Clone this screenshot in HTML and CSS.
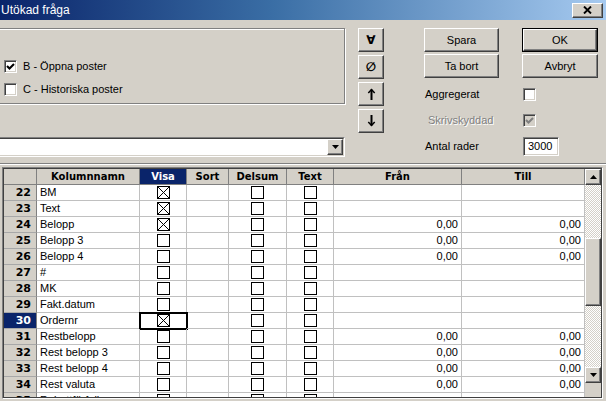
FILE: index.html
```html
<!DOCTYPE html>
<html>
<head>
<meta charset="utf-8">
<title>Utökad fråga</title>
<link rel="stylesheet" href="styles.css">
</head>
<body>
<div class="titlebar">
  <span class="title">Utökad fråga</span>
  <div class="close raised"><svg width="9" height="8" viewBox="0 0 9 8"><path d="M1 0.5L8 7.5M8 0.5L1 7.5" stroke="#000" stroke-width="1.9" fill="none"/></svg></div>
</div>

<div class="top">
  <div class="left">
    <div class="groupbox">
      <div class="chk-row"><span class="cb"><svg width="11" height="11" viewBox="0 0 11 11"><polyline points="2,5 4.5,7.5 9,3" stroke="#000" stroke-width="2.1" fill="none"/></svg></span><span>B - Öppna poster</span></div>
      <div class="chk-row"><span class="cb"></span><span>C - Historiska poster</span></div>
    </div>
    <div class="combo">
      <div class="combo-in">
        <div class="combo-btn raised"><svg width="7" height="4" viewBox="0 0 7 4"><polygon points="0,0 7,0 3.5,4" fill="#000"/></svg></div>
      </div>
    </div>
  </div>

  <div class="ops">
    <div class="op raised"><span class="glyph">∀</span></div>
    <div class="op raised"><span class="glyph ital">∅</span></div>
    <div class="op raised"><svg width="9" height="12" viewBox="0 0 9 12"><path d="M4.5 1.5V12" stroke="#000" stroke-width="2" fill="none"/><path d="M1.3 5L4.5 1.6L7.7 5" stroke="#000" stroke-width="1.5" fill="none"/></svg></div>
    <div class="op raised"><svg width="9" height="12" viewBox="0 0 9 12"><path d="M4.5 0V10.5" stroke="#000" stroke-width="2" fill="none"/><path d="M1.3 7L4.5 10.4L7.7 7" stroke="#000" stroke-width="1.5" fill="none"/></svg></div>
  </div>

  <div class="actions">
    <div class="act-row">
      <div class="btn raised w1">Spara</div>
      <div class="btn default w2"><div class="raised inner">OK</div></div>
    </div>
    <div class="act-row r2">
      <div class="btn raised w1">Ta bort</div>
      <div class="btn raised w2">Avbryt</div>
    </div>
    <div class="opt-row">
      <span class="opt-label">Aggregerat</span>
      <span class="cb"></span>
    </div>
    <div class="opt-row">
      <span class="opt-label disabled">Skrivskyddad</span>
      <span class="cb dis"><svg width="11" height="11" viewBox="0 0 11 11"><polyline points="2,5 4.5,7.5 9,3" stroke="#808080" stroke-width="2.1" fill="none"/></svg></span>
    </div>
    <div class="opt-row">
      <span class="opt-label">Antal rader</span>
      <span class="num-input">3000</span>
    </div>
  </div>
</div>

<div class="sep"></div>

<div class="gridbox">
  <div class="gridinner">
    <div class="grid">
      <div class="c h"></div><div class="c h">Kolumnnamn</div><div class="c h hsel">Visa</div><div class="c h">Sort</div><div class="c h">Delsum</div><div class="c h">Text</div><div class="c h">Från</div><div class="c h">Till</div>

      <div class="c rh">22</div><div class="c">BM</div><div class="c ck"><span class="box"><svg width="11" height="11" viewBox="0 0 11 11"><path d="M0 0L11 11M11 0L0 11" stroke="#000" stroke-width="1"/></svg></span></div><div class="c"></div><div class="c ck"><span class="box"></span></div><div class="c ck"><span class="box"></span></div><div class="c num"></div><div class="c num"></div>

      <div class="c rh">23</div><div class="c">Text</div><div class="c ck"><span class="box"><svg width="11" height="11" viewBox="0 0 11 11"><path d="M0 0L11 11M11 0L0 11" stroke="#000" stroke-width="1"/></svg></span></div><div class="c"></div><div class="c ck"><span class="box"></span></div><div class="c ck"><span class="box"></span></div><div class="c num"></div><div class="c num"></div>

      <div class="c rh">24</div><div class="c">Belopp</div><div class="c ck"><span class="box"><svg width="11" height="11" viewBox="0 0 11 11"><path d="M0 0L11 11M11 0L0 11" stroke="#000" stroke-width="1"/></svg></span></div><div class="c"></div><div class="c ck"><span class="box"></span></div><div class="c ck"><span class="box"></span></div><div class="c num">0,00</div><div class="c num">0,00</div>

      <div class="c rh">25</div><div class="c">Belopp 3</div><div class="c ck"><span class="box"></span></div><div class="c"></div><div class="c ck"><span class="box"></span></div><div class="c ck"><span class="box"></span></div><div class="c num">0,00</div><div class="c num">0,00</div>

      <div class="c rh">26</div><div class="c">Belopp 4</div><div class="c ck"><span class="box"></span></div><div class="c"></div><div class="c ck"><span class="box"></span></div><div class="c ck"><span class="box"></span></div><div class="c num">0,00</div><div class="c num">0,00</div>

      <div class="c rh">27</div><div class="c">#</div><div class="c ck"><span class="box"></span></div><div class="c"></div><div class="c ck"><span class="box"></span></div><div class="c ck"><span class="box"></span></div><div class="c num"></div><div class="c num"></div>

      <div class="c rh">28</div><div class="c">MK</div><div class="c ck"><span class="box"></span></div><div class="c"></div><div class="c ck"><span class="box"></span></div><div class="c ck"><span class="box"></span></div><div class="c num"></div><div class="c num"></div>

      <div class="c rh">29</div><div class="c">Fakt.datum</div><div class="c ck"><span class="box"></span></div><div class="c"></div><div class="c ck"><span class="box"></span></div><div class="c ck"><span class="box"></span></div><div class="c num"></div><div class="c num"></div>

      <div class="c rh rsel">30</div><div class="c">Ordernr</div><div class="c ck focus"><span class="box"><svg width="11" height="11" viewBox="0 0 11 11"><path d="M0 0L11 11M11 0L0 11" stroke="#000" stroke-width="1"/></svg></span></div><div class="c"></div><div class="c ck"><span class="box"></span></div><div class="c ck"><span class="box"></span></div><div class="c num"></div><div class="c num"></div>

      <div class="c rh">31</div><div class="c">Restbelopp</div><div class="c ck"><span class="box"></span></div><div class="c"></div><div class="c ck"><span class="box"></span></div><div class="c ck"><span class="box"></span></div><div class="c num">0,00</div><div class="c num">0,00</div>

      <div class="c rh">32</div><div class="c">Rest belopp 3</div><div class="c ck"><span class="box"></span></div><div class="c"></div><div class="c ck"><span class="box"></span></div><div class="c ck"><span class="box"></span></div><div class="c num">0,00</div><div class="c num">0,00</div>

      <div class="c rh">33</div><div class="c">Rest belopp 4</div><div class="c ck"><span class="box"></span></div><div class="c"></div><div class="c ck"><span class="box"></span></div><div class="c ck"><span class="box"></span></div><div class="c num">0,00</div><div class="c num">0,00</div>

      <div class="c rh">34</div><div class="c">Rest valuta</div><div class="c ck"><span class="box"></span></div><div class="c"></div><div class="c ck"><span class="box"></span></div><div class="c ck"><span class="box"></span></div><div class="c num">0,00</div><div class="c num">0,00</div>

      <div class="c rh">35</div><div class="c">Rabattförfall</div><div class="c ck"><span class="box"></span></div><div class="c"></div><div class="c ck"><span class="box"></span></div><div class="c ck"><span class="box"></span></div><div class="c num"></div><div class="c num"></div>
    </div>
    <div class="vscroll">
      <div class="sb-btn raised"><svg width="7" height="4" viewBox="0 0 7 4"><polygon points="3.5,0 7,4 0,4" fill="#000"/></svg></div>
      <div class="sb-track t1"></div>
      <div class="sb-thumb raised"></div>
      <div class="sb-track t2"></div>
      <div class="sb-btn raised"><svg width="7" height="4" viewBox="0 0 7 4"><polygon points="0,0 7,0 3.5,4" fill="#000"/></svg></div>
      <div class="sb-corner"></div>
    </div>
  </div>
</div>
</body>
</html>
```

FILE: styles.css
```css
* { box-sizing: border-box; }
html, body { margin: 0; padding: 0; }
body {
  width: 606px;
  height: 401px;
  overflow: hidden;
  background: #d4d0c8;
  font-family: "Liberation Sans", Arial, sans-serif;
  font-size: 11px;
  color: #000;
}

.raised {
  background: #d4d0c8;
  border: 1px solid;
  border-color: #fff #404040 #404040 #fff;
  box-shadow: inset -1px -1px #808080;
}

/* title bar */
.titlebar {
  height: 20px;
  display: flex;
  align-items: center;
  justify-content: space-between;
  background: linear-gradient(to right, #0a246a 0%, #3a6ea5 45%, #a6caf0 100%);
}
.title {
  color: #fff;
  font-size: 12px;
  padding-left: 1px;
}
.close {
  width: 31px;
  height: 15px;
  margin-right: 3px;
  display: flex;
  align-items: center;
  justify-content: center;
}

/* top area */
.top {
  display: flex;
  height: 142px;
}
.left {
  flex: none;
  width: 347px;
  margin-left: -2px;
  padding-top: 8px;
}
.groupbox {
  height: 76px;
  border: 1px solid #808080;
  box-shadow: inset 1px 1px #fff, 1px 1px #fff;
  padding: 29px 0 0 5px;
  display: flex;
  flex-direction: column;
  gap: 7px;
}
.chk-row {
  display: flex;
  align-items: center;
  height: 16px;
  gap: 6px;
}
.cb {
  flex: none;
  width: 13px;
  height: 13px;
  background: #fff;
  border: 1px solid;
  border-color: #808080 #fff #fff #808080;
  box-shadow: inset 1px 1px #404040, inset -1px -1px #d4d0c8;
  display: block;
}
.cb svg { display: block; }
.cb.dis { background: #d4d0c8; }

.combo {
  margin-top: 33px;
  height: 20px;
  border: 1px solid;
  border-color: #808080 #fff #fff #808080;
}
.combo-in {
  height: 100%;
  background: #fff;
  border: 1px solid;
  border-color: #404040 #d4d0c8 #d4d0c8 #404040;
  display: flex;
  justify-content: flex-end;
}
.combo-btn {
  width: 16px;
  height: 100%;
  display: flex;
  align-items: center;
  justify-content: center;
}

.ops {
  flex: none;
  width: 26px;
  margin-left: 13px;
  padding-top: 8px;
  display: flex;
  flex-direction: column;
  gap: 3px;
}
.op {
  height: 24px;
  display: flex;
  align-items: center;
  justify-content: center;
}
.glyph {
  font-family: "DejaVu Sans", sans-serif;
  font-weight: bold;
  font-size: 12px;
  line-height: 12px;
}
.glyph.ital { font-style: italic; }

.actions {
  flex: none;
  width: 175px;
  margin-left: 40px;
  padding-top: 8px;
}
.act-row {
  display: flex;
  gap: 23px;
  height: 24px;
}
.act-row.r2 { margin-top: 2px; }
.btn {
  height: 24px;
  display: flex;
  align-items: center;
  justify-content: center;
  font-size: 11px;
}
.w1 { width: 75px; }
.w2 { width: 76px; }
.btn.default {
  border: 1px solid #000;
}
.btn.default .inner {
  width: 100%;
  height: 100%;
  display: flex;
  align-items: center;
  justify-content: center;
}
.opt-row {
  display: flex;
  align-items: center;
  height: 20px;
  margin-top: 6px;
}
.opt-label {
  width: 99px;
  padding-left: 1px;
}
.opt-label.disabled {
  color: #808080;
  text-shadow: 1px 1px #fff;
  padding-left: 4px;
}
.num-input {
  width: 36px;
  height: 19px;
  background: #fff;
  border: 1px solid;
  border-color: #808080 #fff #fff #808080;
  box-shadow: inset 1px 1px #404040, inset -1px -1px #d4d0c8;
  padding-left: 4px;
  line-height: 17px;
}

.sep {
  margin-top: 1px;
  height: 2px;
  border-top: 1px solid #808080;
  border-bottom: 1px solid #fff;
}

/* grid */
.gridbox {
  margin: 2px 0 0 2px;
  width: 601px;
  height: 232px;
  border: 1px solid;
  border-color: #808080 #fff #fff #808080;
}
.gridinner {
  height: 100%;
  border: 1px solid #404040;
  display: flex;
  overflow: hidden;
}
.grid {
  flex: none;
  width: 581px;
  display: grid;
  grid-template-columns: 33px 103px 47px 42px 58px 47px 128px 123px;
  grid-auto-rows: 16px;
  align-content: start;
  background: #fff;
  overflow: hidden;
}
.c {
  border-right: 1px solid #c0c0c0;
  border-bottom: 1px solid #c0c0c0;
  padding: 0 3px;
  line-height: 15px;
  white-space: nowrap;
  overflow: hidden;
}
.c.h {
  background: #d4d0c8;
  font-family: "DejaVu Sans", sans-serif;
  font-weight: bold;
  font-size: 10px;
  text-align: center;
  border-right-color: #808080;
  border-bottom-color: #808080;
}
.c.hsel {
  background: #0a246a;
  color: #fff;
}
.c.rh {
  background: #d4d0c8;
  font-family: "DejaVu Sans", sans-serif;
  font-weight: bold;
  font-size: 11px;
  text-align: right;
  padding-right: 5px;
  border-right-color: #808080;
  border-bottom-color: #a8a8a8;
}
.c.rsel {
  background: #0a246a;
  color: #fff;
}
.c.num {
  text-align: right;
  padding-right: 3px;
}
.c.ck {
  display: flex;
  align-items: center;
  justify-content: center;
}
.c.focus {
  overflow: visible;
  outline: 2px solid #000;
  outline-offset: -1px;
}
.box {
  width: 13px;
  height: 13px;
  border: 1px solid #000;
  background: #fff;
  display: block;
}
.box svg { display: block; }

.vscroll {
  flex: none;
  width: 16px;
  display: flex;
  flex-direction: column;
}
.sb-btn {
  height: 16px;
  flex: none;
  display: flex;
  align-items: center;
  justify-content: center;
}
.sb-track {
  flex: none;
  background: repeating-conic-gradient(#d4d0c8 0 25%, #fff 0 50%) 0 0 / 2px 2px;
}
.sb-track.t1 { height: 53px; }
.sb-track.t2 { height: 61px; }
.sb-thumb { flex: none; height: 68px; }
.sb-corner { flex: 1; background: #d4d0c8; }
```
